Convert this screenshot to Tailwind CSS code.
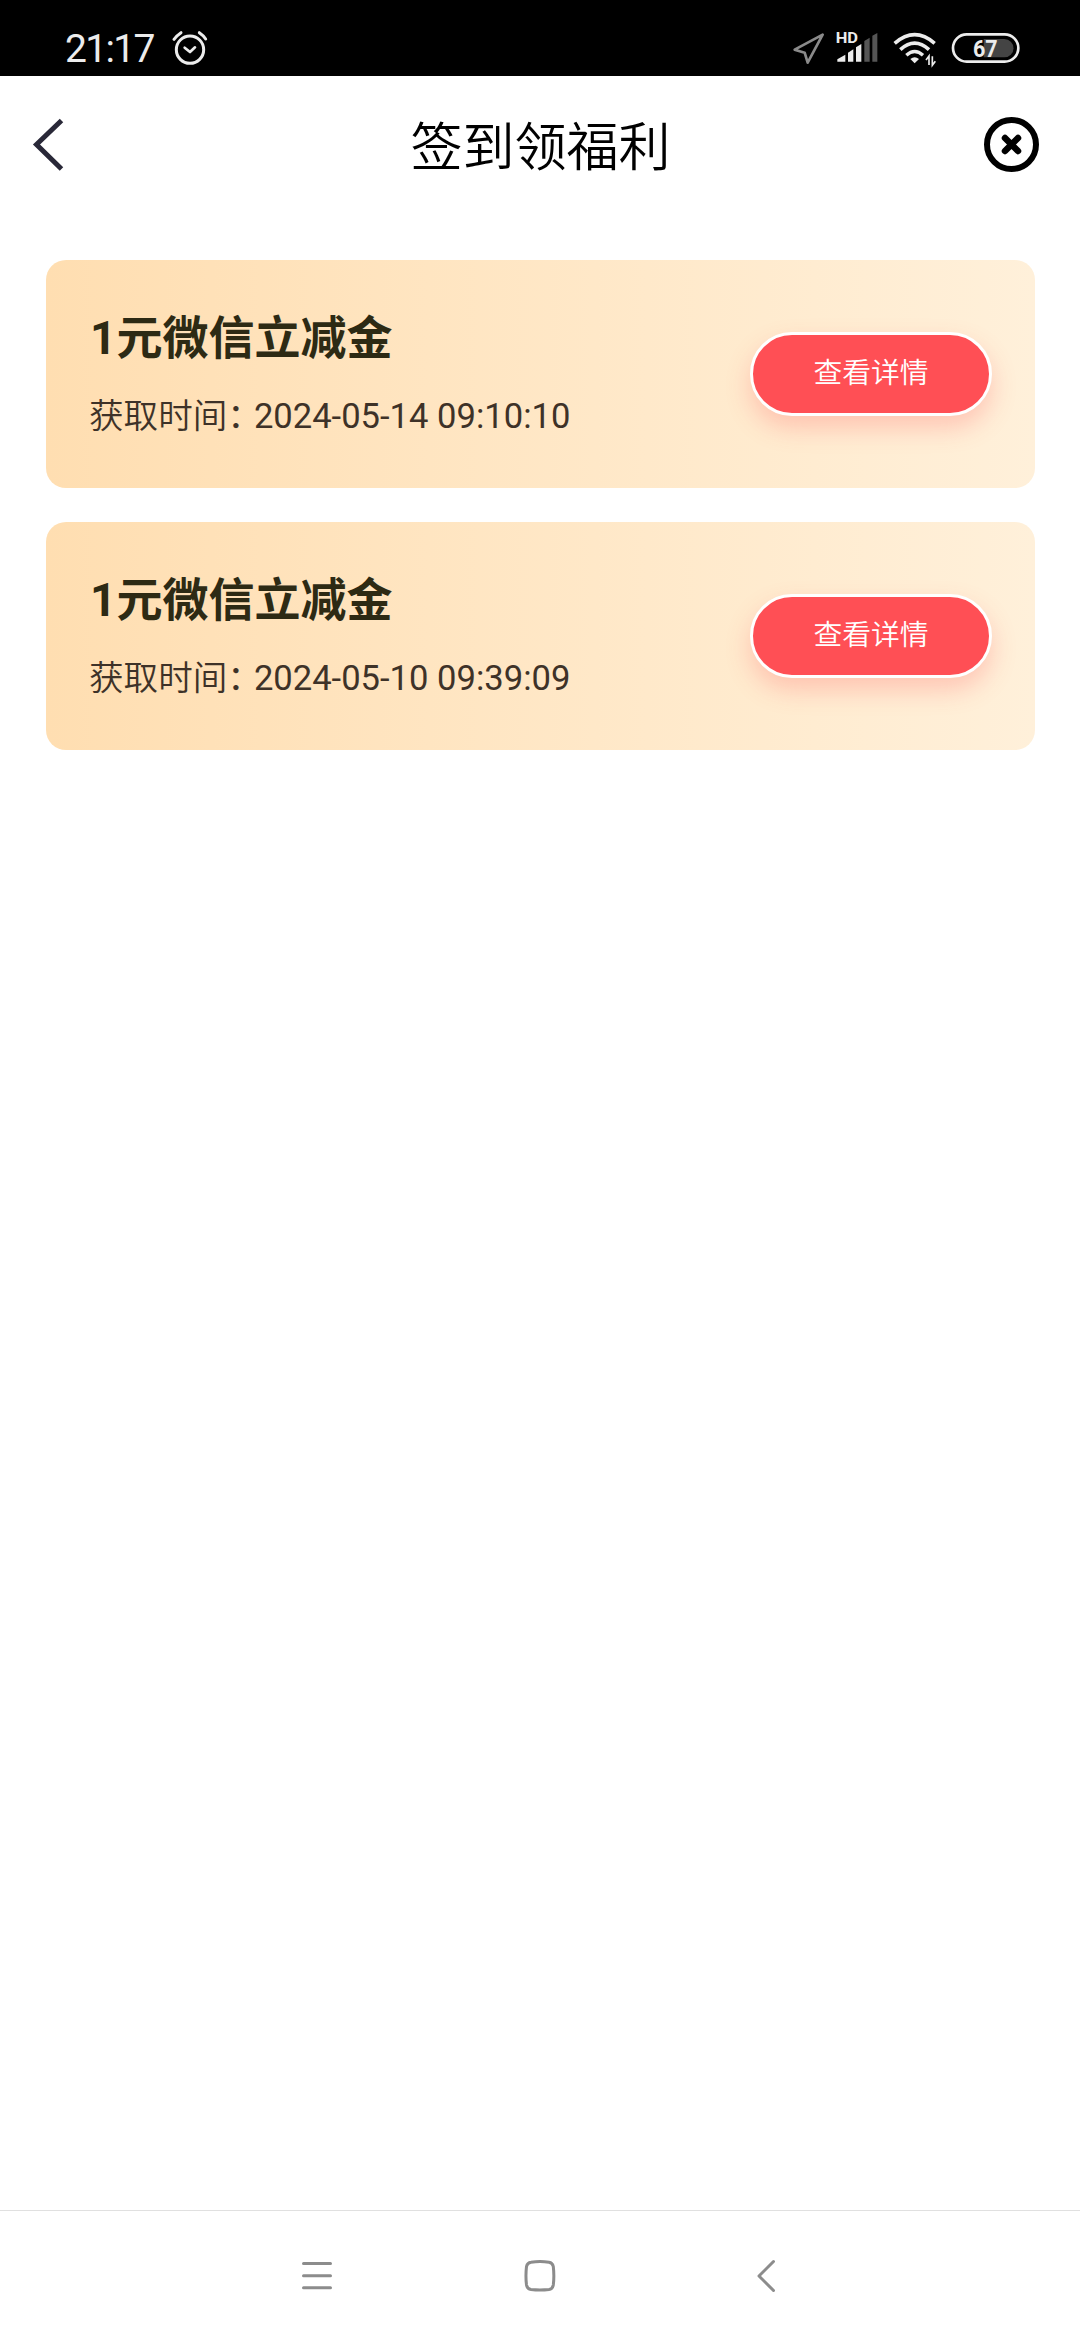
<!DOCTYPE html>
<html lang="zh-CN">
<head>
<meta charset="utf-8">
<title>签到领福利</title>
<script src="https://cdn.jsdelivr.net/npm/@tailwindcss/browser@4"></script>
</head>
<body class="bg-white">
<div class="flex h-[2340px] w-[1080px] flex-col overflow-hidden bg-white font-['Roboto','Noto_Sans_CJK_SC',sans-serif]">

  <!-- Status bar -->
  <div class="flex h-[76px] shrink-0 items-start justify-between bg-black pt-[28px] pr-[60px] pl-[65px] text-[#ececec]">
    <div class="flex items-start">
      <span class="w-[106px] text-[39px] leading-[42px] tracking-[-1.7px]">21:17</span>
      <svg class="h-[40px] w-[38px]" viewBox="393 84 114 120" fill="none" stroke="#ececec" stroke-linecap="round" stroke-linejoin="round">
        <circle cx="450" cy="149" r="41" stroke-width="9"/>
        <path d="M434 143l16 13 15-14" stroke-width="8"/>
        <path d="M402 118q9-12 21-20M478 98q12 8 19 19" stroke-width="9"/>
      </svg>
    </div>
    <div class="flex items-start">
      <svg class="mr-[10px] h-[40px] w-[34px]" viewBox="38 84 102 120" fill="none" stroke="#8a8a8a" stroke-width="8" stroke-linejoin="round">
        <path d="M130 104L46 149l30 9 9 30z"/>
      </svg>
      <svg class="mr-[13px] h-[40px] w-[44px]" viewBox="170 84 132 120">
        <text x="169" y="128" font-family="Roboto" font-weight="700" font-size="44" textLength="67" lengthAdjust="spacingAndGlyphs" fill="#ececec">HD</text>
        <path d="M174 185v-7l24-14v21zM206 185v-27l16-10v37zM230 185v-43l16-10v53z" fill="#ececec"/>
        <path d="M255 185v-62l16-10v72zM279 185v-78l15-8v86z" fill="#555"/>
      </svg>
      <svg class="mr-[14px] h-[40px] w-[44px]" viewBox="340 84 132 120" fill="none" stroke="#ececec">
        <path d="M345 130q60-52 120 0" stroke-width="11"/>
        <path d="M362 149q43-39 86 0" stroke-width="11"/>
        <path d="M380 166q25-23 50 0" stroke-width="10"/>
        <path d="M392 177q13-11 26 0l-13 13z" fill="#ececec" stroke="none"/>
        <path d="M439 180l9-12v27M467 184l-9 12v-27" stroke-width="5"/>
      </svg>
      <svg class="h-[40px] w-[69px]" viewBox="514 84 207 120">
        <rect x="520" y="103" width="196" height="82" rx="41" fill="none" stroke="#ececec" stroke-width="8"/>
        <path d="M612 117h62a27 27 0 0 1 0 55h-62z" fill="#444"/>
        <text x="580" y="171" font-family="Roboto" font-weight="700" font-size="74" textLength="74" lengthAdjust="spacingAndGlyphs" fill="#ececec">67</text>
      </svg>
    </div>
  </div>

  <!-- Page header -->
  <header class="flex h-[138px] shrink-0 items-center justify-between pr-[40px] pl-[32px]">
    <svg class="h-[56px] w-[56px]" viewBox="0 0 56 56" fill="none" stroke="#292838" stroke-width="5">
      <path d="M29.500 3.500L4.500 27.500L29.500 52"/>
    </svg>
    <h1 class="pt-[8px] pl-[9px] text-[52px] leading-[60px] font-[350] text-black">签到领福利</h1>
    <svg class="h-[56px] w-[56px]" viewBox="0 0 56 56" fill="none" stroke="#000" stroke-linecap="round">
      <circle cx="27.500" cy="27.500" r="24.500" stroke-width="6"/>
      <path d="M21 21l13 13M34 21l-13 13" stroke-width="6.500"/>
    </svg>
  </header>

  <!-- Coupon list -->
  <main class="flex flex-1 flex-col gap-[34px] pt-[46px] pr-[45px] pl-[46px]">
    <section class="flex h-[228px] items-center justify-between rounded-[20px] bg-linear-to-r from-[#ffdeb1] to-[#fff0da] pr-[43px] pl-[44px]">
      <div class="flex flex-col gap-[23px]">
        <h2 class="text-[46px] leading-[60px] font-bold text-[#2d2a14]">1元微信立减金</h2>
        <p class="-ml-px text-[34.600px] leading-[50px] font-[350] text-[#3e3228]">获取时间<span class="font-normal tracking-[-8px]">：</span><span class="font-normal">2024-05-14 09:10:10</span></p>
      </div>
      <button class="h-[84px] w-[242px] rounded-full border-3 border-white bg-[#ff4f55] text-[28.8px] font-[350] text-white shadow-[0_12px_24px_rgba(255,79,85,0.25)]">查看详情</button>
    </section>
    <section class="flex h-[228px] items-center justify-between rounded-[20px] bg-linear-to-r from-[#ffdeb1] to-[#fff0da] pr-[43px] pl-[44px]">
      <div class="flex flex-col gap-[23px]">
        <h2 class="text-[46px] leading-[60px] font-bold text-[#2d2a14]">1元微信立减金</h2>
        <p class="-ml-px text-[34.600px] leading-[50px] font-[350] text-[#3e3228]">获取时间<span class="font-normal tracking-[-8px]">：</span><span class="font-normal">2024-05-10 09:39:09</span></p>
      </div>
      <button class="h-[84px] w-[242px] rounded-full border-3 border-white bg-[#ff4f55] text-[28.8px] font-[350] text-white shadow-[0_12px_24px_rgba(255,79,85,0.25)]">查看详情</button>
    </section>
  </main>

  <!-- System navigation -->
  <nav class="flex h-[130px] shrink-0 items-center justify-between border-t border-[#e0e0e0] pr-[296px] pl-[300px]">
    <svg class="h-[34px] w-[34px]" viewBox="0 0 34 34" stroke="#8c8c8c" stroke-width="3" stroke-linecap="round"><path d="M3.500 4.500h27M3.500 16.700h27M3.500 28.700h27"/></svg>
    <svg class="mr-[4px] h-[34px] w-[34px]" viewBox="0 0 34 34" fill="none" stroke="#8c8c8c" stroke-width="3"><path d="M8 3.200Q17 2 26 3.200Q29.500 3.600 30.300 7.500Q31.400 17 30.300 26Q29.500 30 26 30.500Q17 31.500 8 30.500Q4.300 30 3.500 26Q2.400 17 3.500 7.500Q4.300 3.600 8 3.200Z"/></svg>
    <svg class="h-[34px] w-[34px]" viewBox="0 0 34 34" fill="none" stroke="#8c8c8c" stroke-width="3" stroke-linecap="round" stroke-linejoin="round"><path d="M23.500 2.500L9 17L23.500 31.500"/></svg>
  </nav>
</div>
</body>
</html>
